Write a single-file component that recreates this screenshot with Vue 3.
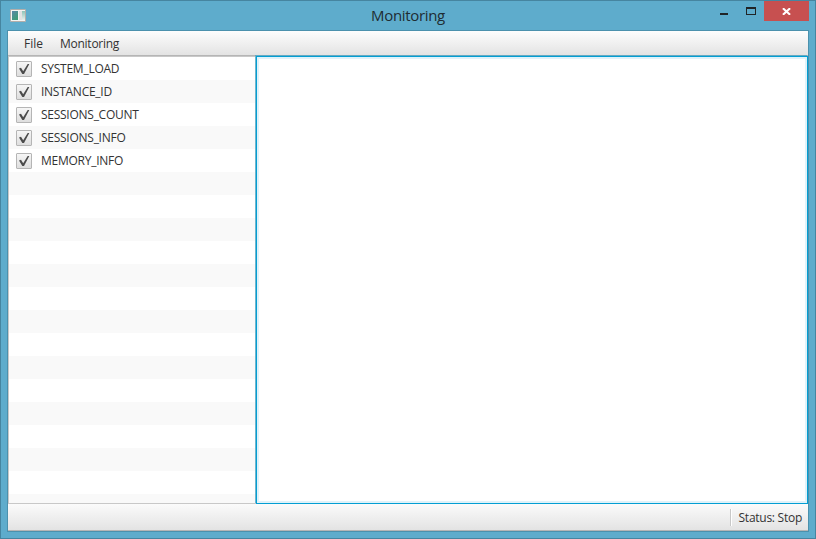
<script setup>
const menus = [
  { label: 'File', cls: 'm-file' },
  { label: 'Monitoring', cls: 'm-mon' },
]
const items = ['SYSTEM_LOAD', 'INSTANCE_ID', 'SESSIONS_COUNT', 'SESSIONS_INFO', 'MEMORY_INFO']
const rows = Array.from({ length: 20 }, (_, i) => items[i] || '')
</script>

<template>
  <div class="window">
    <header class="titlebar">
      <svg class="app-icon" width="16" height="13" viewBox="0 0 16 13">
        <defs>
          <linearGradient id="ic" x1="0" y1="0" x2="0.6" y2="1">
            <stop offset="0" stop-color="#5b86a8" />
            <stop offset="1" stop-color="#3f9c78" />
          </linearGradient>
          <linearGradient id="ic2" x1="0" y1="0" x2="0" y2="1">
            <stop offset="0" stop-color="#8cc4b8" />
            <stop offset="1" stop-color="#e6eeec" />
          </linearGradient>
        </defs>
        <rect x="0.5" y="0.5" width="15" height="12" rx="0.5" fill="#f4f4f2" stroke="#b3aeaa" />
        <rect x="2" y="2" width="6" height="9" fill="url(#ic)" />
        <rect x="9" y="2" width="3" height="9" fill="#e2e2e2" />
        <rect x="12" y="2" width="3" height="9" fill="url(#ic2)" />
      </svg>
      <h1 class="title">Monitoring</h1>
      <div class="controls">
        <svg class="min" width="8" height="2"><rect width="8" height="2" fill="#202426" /></svg>
        <svg class="max" width="10" height="8" shape-rendering="crispEdges">
          <path d="M0 0H10V8H0ZM1 2V7H9V2Z" fill="#202426" fill-rule="evenodd" />
        </svg>
        <div class="close">
          <svg width="9" height="7" viewBox="0 0 9 7">
            <path d="M0.9 0.2L8.1 6.8M8.1 0.2L0.9 6.8" stroke="#fff" stroke-width="2" />
          </svg>
        </div>
      </div>
    </header>
    <main class="client">
      <nav class="menubar">
        <span v-for="m in menus" :key="m.label" :class="m.cls">{{ m.label }}</span>
      </nav>
      <div class="content">
        <ul class="list">
          <li v-for="(r, i) in rows" :key="i" class="row">
            <template v-if="r">
              <span class="check">
                <svg width="16" height="16" viewBox="0 0 16 16">
                  <path d="M3 7.6L5 6.8L7.2 10.3L11.7 3H13.3L8 13H6.3Z" fill="#4b4b4b" />
                </svg>
              </span>
              <span class="name">{{ r }}</span>
            </template>
          </li>
        </ul>
        <section class="output"></section>
      </div>
      <footer class="status">
        <span class="sep"></span>
        <span class="status-text">Status: Stop</span>
      </footer>
    </main>
  </div>
</template>

<style>
body { margin: 0; overflow: hidden; }
</style>

<style scoped>
* { box-sizing: border-box; }
.window {
  width: 816px;
  height: 539px;
  display: flex;
  flex-direction: column;
  padding: 0 6px 6px;
  border: 1px solid #4685a0;
  background: #5eaccc;
  font-family: "Open Sans", "Noto Sans", sans-serif;
  font-size: 12px;
  letter-spacing: -0.26px;
  color: #333;
}
.titlebar {
  height: 29px;
  flex: none;
  display: grid;
  grid-template-columns: 103px 1fr 103px;
  align-items: start;
}
.app-icon { margin: 8px 0 0 3px; }
.title {
  margin: 3px 0 0;
  text-align: center;
  font-size: 15px;
  line-height: 22px;
  font-weight: 400;
  letter-spacing: -0.33px;
  color: #1e2c33;
}
.controls { display: flex; align-items: flex-start; justify-content: flex-end; }
.min { margin: 12px 18px 0 0; flex: none; }
.max { margin: 6px 8px 0 0; flex: none; }
.close {
  width: 45px;
  height: 20px;
  display: flex;
  flex: none;
  justify-content: center;
  align-items: center;
  background: #c75050;
}
.client {
  width: 802px;
  height: 502px;
  flex: none;
  display: flex;
  flex-direction: column;
  border: 1px solid #4b91ad;
}
.menubar {
  height: 25px;
  flex: none;
  display: flex;
  align-items: center;
  padding-left: 16px;
  border-bottom: 1px solid #b5b5b5;
  background: linear-gradient(#fdfdfd, #e3e3e3);
}
.m-file { width: 36px; letter-spacing: 0; }
.content { height: 448px; flex: none; display: flex; }
.list {
  width: 248px;
  flex: none;
  margin: 0;
  padding: 0;
  list-style: none;
  overflow: hidden;
  border: 1px solid #c8c8c8;
  background: #fff;
}
.row { height: 23px; display: flex; align-items: center; padding-left: 7px; }
.row:nth-child(even) { background: #f9f9f9; }
.check {
  width: 16px;
  height: 16px;
  margin-right: 9px;
  border: 1px solid #b5b5b5;
  border-radius: 1px;
  background: linear-gradient(#f6f6f6, #dedede);
}
.check svg { display: block; margin: -1px; }
.name { white-space: nowrap; }
.output {
  flex: 1;
  border: 1px solid #039ed3;
  background: #fff;
  box-shadow: inset 0 0 0 2px #e0f2f9, -1px -1px 0 0 rgba(3, 158, 211, 0.45);
}
.status {
  height: 27px;
  display: flex;
  justify-content: flex-end;
  align-items: center;
  padding-right: 6px;
  border-bottom: 1px solid #b5b5b5;
  background: linear-gradient(#fbfbfb, #e3e3e3);
}
.status-text { padding-top: 1px; }
.sep { width: 2px; height: 17px; margin-right: 7px; border-left: 1px solid #c8c8c8; border-right: 1px solid #fff; }
</style>
